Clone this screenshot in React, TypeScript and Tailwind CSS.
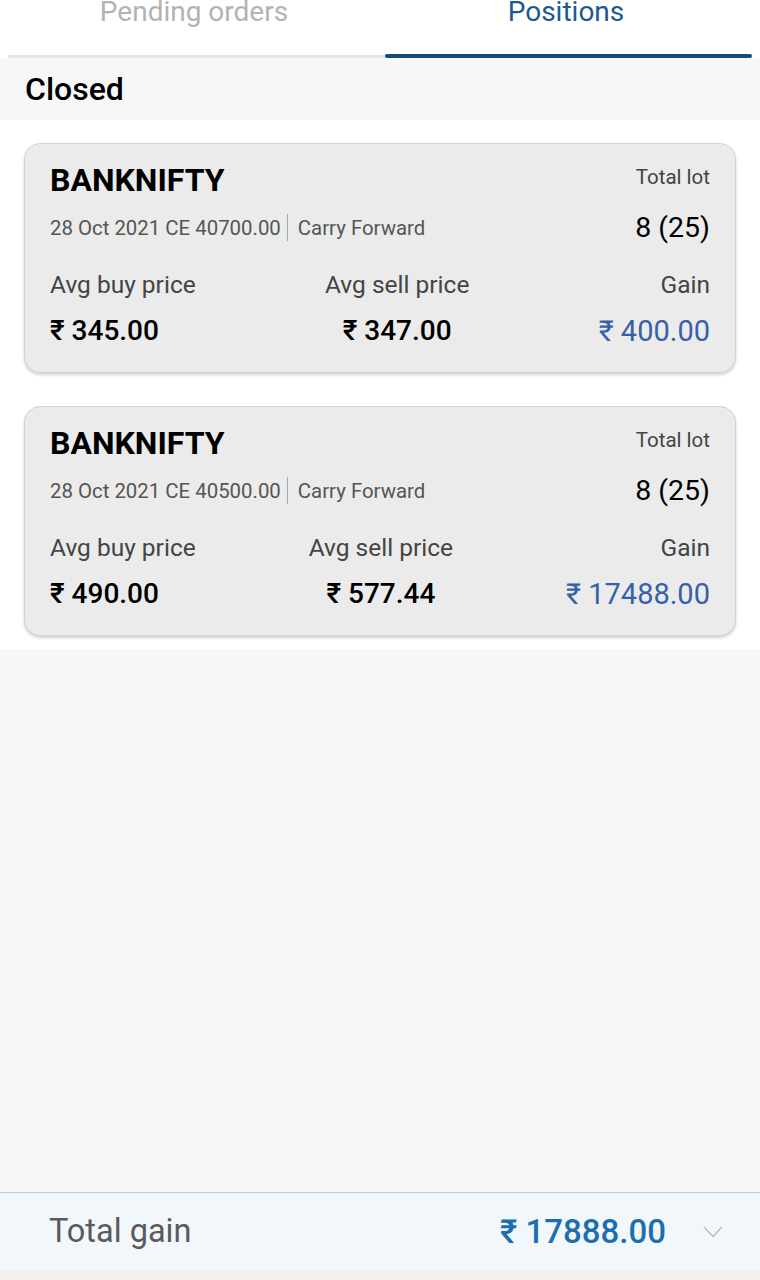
import React from 'react';

interface Position {
  symbol: string;
  contract: string;
  product: string;
  lots: string;
  avgBuy: string;
  avgSell: string;
  gain: string;
}

const positions: Position[] = [
  {
    symbol: 'BANKNIFTY',
    contract: '28 Oct 2021 CE 40700.00',
    product: 'Carry Forward',
    lots: '8 (25)',
    avgBuy: '₹ 345.00',
    avgSell: '₹ 347.00',
    gain: '₹ 400.00',
  },
  {
    symbol: 'BANKNIFTY',
    contract: '28 Oct 2021 CE 40500.00',
    product: 'Carry Forward',
    lots: '8 (25)',
    avgBuy: '₹ 490.00',
    avgSell: '₹ 577.44',
    gain: '₹ 17488.00',
  },
];

const PositionCard = ({ p }: { p: Position }) => (
  <div className="rounded-[16px] border border-[#d4d4d4] bg-[#ebebeb] px-[25px] pt-[17px] pb-[24px] shadow-[0_2px_3px_rgba(0,0,0,0.18)]">
    {/* symbol + total lot */}
    <div className="flex h-[38px] items-start justify-between">
      <span className="text-[32px] font-bold leading-[38px] text-black">{p.symbol}</span>
      <span className="mt-[4px] text-[20.5px] leading-[24px] text-[#444]">Total lot</span>
    </div>
    <div className="mt-[9px] flex h-[40px] items-center justify-between">
      <div className="flex items-center text-[20.4px] text-[#555]">
        <span>{p.contract}</span>
        <span className="mr-[10px] ml-[6px] h-[27px] w-px bg-[#a8a8a8]" />
        <span>{p.product}</span>
      </div>
      <span className="text-[28.5px] text-black">{p.lots}</span>
    </div>
    {/* prices */}
    <div className="mt-[22px] flex justify-between">
      <div className="flex flex-col items-start">
        <span className="text-[24.5px] leading-[30px] text-[#444]">Avg buy price</span>
        <span className="mt-[14px] text-[28px] font-medium leading-[34px] text-black">{p.avgBuy}</span>
      </div>
      <div className="flex flex-col items-center">
        <span className="text-[24.5px] leading-[30px] text-[#444]">Avg sell price</span>
        <span className="mt-[14px] text-[28px] font-medium leading-[34px] text-black">{p.avgSell}</span>
      </div>
      <div className="flex flex-col items-end">
        <span className="text-[24.5px] leading-[30px] text-[#444]">Gain</span>
        <span className="mt-[14px] text-[29px] leading-[34px] text-[#3660a8]">{p.gain}</span>
      </div>
    </div>
  </div>
);

export default function App() {
  return (
    <div className="flex min-h-[1280px] flex-col bg-white font-['Roboto','Noto_Sans',sans-serif]">
      {/* tabs */}
      <div className="h-[58px] overflow-hidden px-2">
        <div className="-mt-[2px] flex">
          <div className="flex-1 text-center text-[28px] leading-[28px] text-[#b3b3b3]">Pending orders</div>
          <div className="flex-1 text-center text-[28px] leading-[28px] text-[#1b5a91]">Positions</div>
        </div>
        <div className="mt-[28px] flex items-end">
          <div className="h-[3px] w-[377px] bg-[#e6e6e6]" />
          <div className="h-[4px] flex-1 rounded-full bg-[#174a74]" />
        </div>
      </div>

      <div className="flex h-[62px] items-center bg-[#f7f7f7] px-[25px]">
        <span className="text-[32px] font-medium text-black">Closed</span>
      </div>

      <div className="flex flex-col gap-[33px] bg-white px-6 pt-[23px] pb-[13px]">
        {positions.map((p, i) => (
          <PositionCard key={i} p={p} />
        ))}
      </div>

      <div className="flex-1 bg-[#f8f8f8]" />

      {/* footer */}
      <div className="flex h-[78px] items-center justify-between border-t border-[#c9c9c9] bg-[#f2f7fc] pr-[37px] pl-[49px]">
        <span className="text-[32.5px] text-[#5a5a5a]">Total gain</span>
        <div className="flex items-center gap-[37px]">
          <span className="text-[33px] font-medium text-[#1b6fae]">₹ 17888.00</span>
          <svg width="20" height="12" viewBox="0 0 20 12" fill="none">
            <polyline points="1,1 10,10.5 19,1" stroke="#b8b8b8" strokeWidth="1.3" />
          </svg>
        </div>
      </div>
      <div className="h-[10px] bg-[#f4eff0]" />
    </div>
  );
}
